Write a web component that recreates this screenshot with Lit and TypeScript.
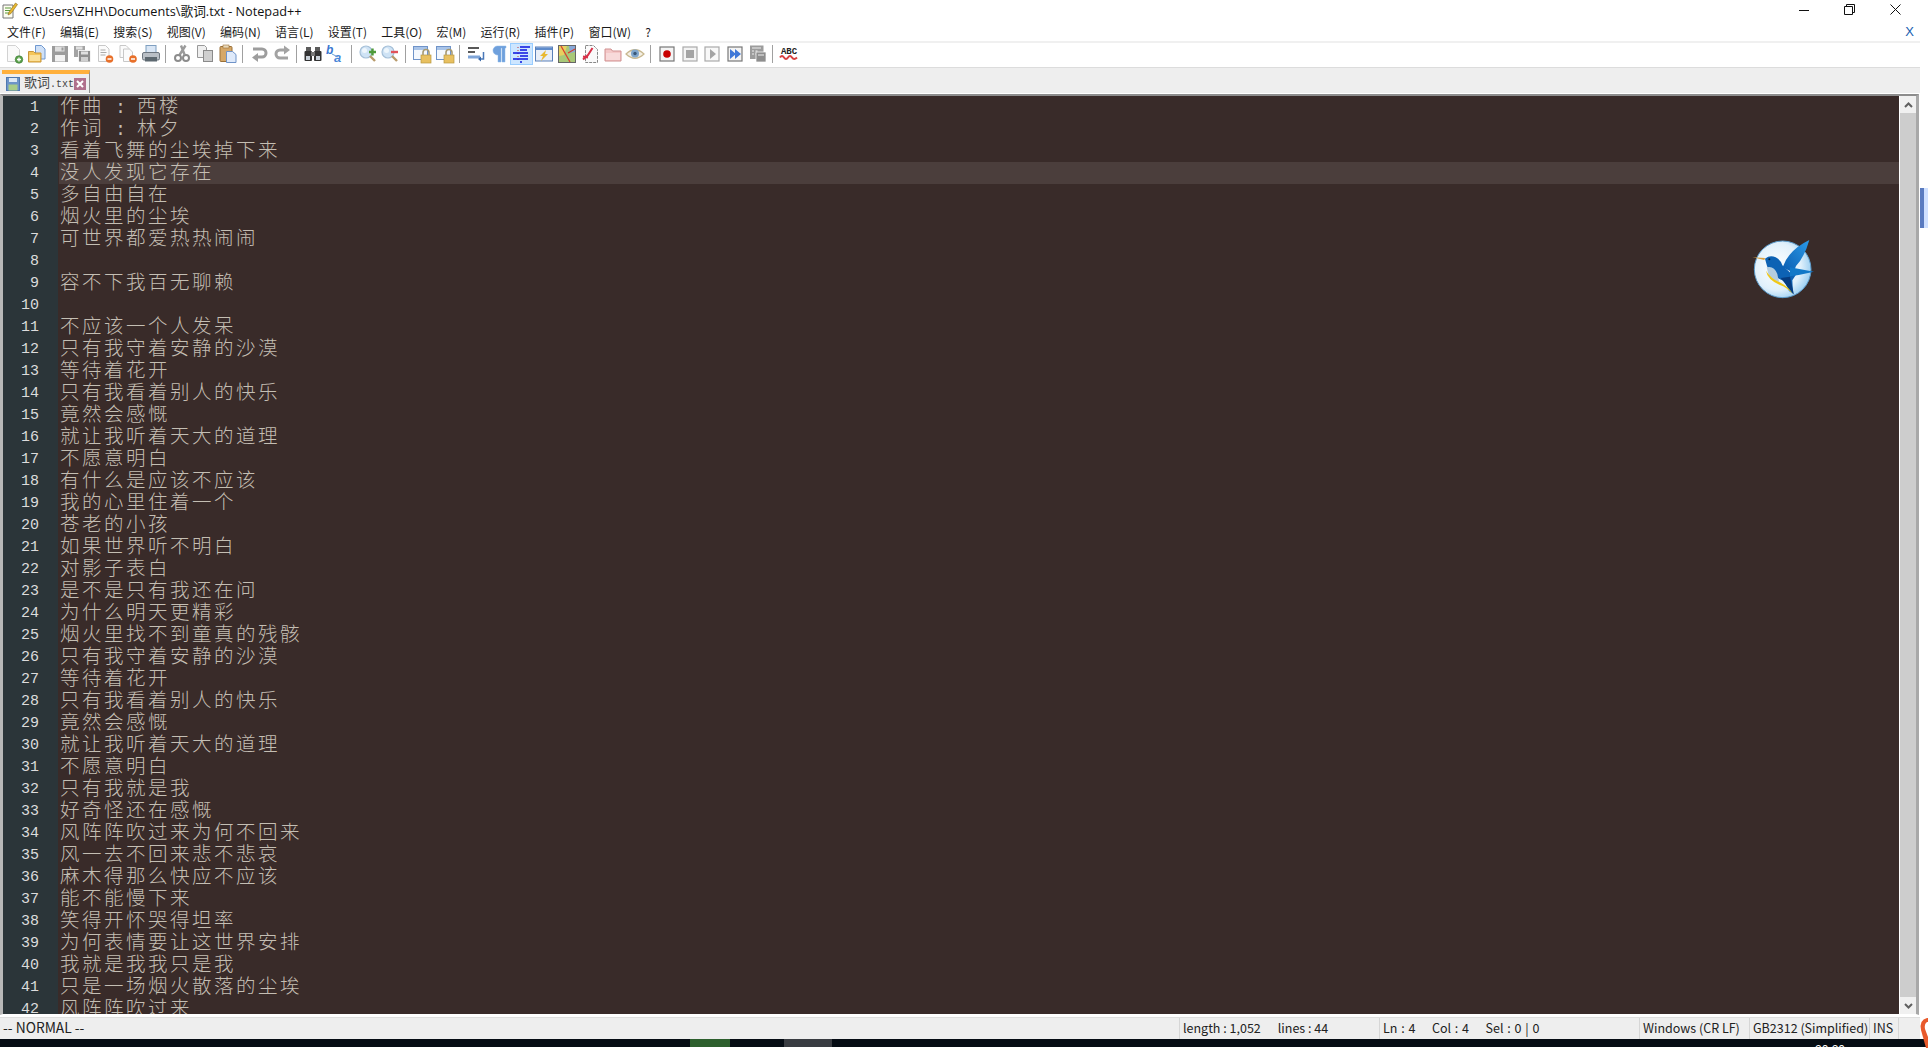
import { LitElement, html, css, svg } from "lit";
import { customElement } from "lit/decorators.js";

const LINES = `作曲 : 西楼
作词 : 林夕
看着飞舞的尘埃掉下来
没人发现它存在
多自由自在
烟火里的尘埃
可世界都爱热热闹闹

容不下我百无聊赖

不应该一个人发呆
只有我守着安静的沙漠
等待着花开
只有我看着别人的快乐
竟然会感慨
就让我听着天大的道理
不愿意明白
有什么是应该不应该
我的心里住着一个
苍老的小孩
如果世界听不明白
对影子表白
是不是只有我还在问
为什么明天更精彩
烟火里找不到童真的残骸
只有我守着安静的沙漠
等待着花开
只有我看着别人的快乐
竟然会感慨
就让我听着天大的道理
不愿意明白
只有我就是我
好奇怪还在感慨
风阵阵吹过来为何不回来
风一去不回来悲不悲哀
麻木得那么快应不应该
能不能慢下来
笑得开怀哭得坦率
为何表情要让这世界安排
我就是我我只是我
只是一场烟火散落的尘埃
风阵阵吹过来`.split("\n");

const MENUS = ["文件(F)", "编辑(E)", "搜索(S)", "视图(V)", "编码(N)", "语言(L)", "设置(T)", "工具(O)", "宏(M)", "运行(R)", "插件(P)", "窗口(W)", "?"];

const TOOLS = [
  "new", "open", "save", "saveall", "close", "closeall", "print", "|",
  "cut", "copy", "paste", "|",
  "undo", "redo", "|",
  "find", "replace", "|",
  "zoomin", "zoomout", "|",
  "syncv", "synch", "|",
  "wrap", "para", "indent", "monitor", "map", "func", "folder", "eye", "|",
  "rec", "stop", "play", "playx", "savemacro", "|",
  "abc",
];

const lock = svg`<rect x="9" y="11" width="10" height="8" fill="#e8c060" stroke="#b89840" stroke-width=".7"/><path d="M11 11V8.500a3 3 0 0 1 6 0V11" fill="none" stroke="#a89a70" stroke-width="1.600"/>`;
const win = svg`<rect x="1.500" y="2.500" width="14" height="13" fill="#f4f8fd" stroke="#6f93c8"/><rect x="2" y="3" width="13" height="3" fill="#a9c4e8"/>`;
const lens = svg`<circle cx="8" cy="8" r="6" fill="#cfe3f5" stroke="#a6c0d8" stroke-width="1.200"/><circle cx="6.500" cy="6.500" r="2.500" fill="#eef6fc"/><path d="M12 12l5 5" stroke="#b89a6a" stroke-width="2.400"/>`;

const ICONS: Record<string, unknown> = {
  new: svg`<path d="M3.500 1.500h8l4 4v12h-12z" fill="#fafafa" stroke="#d2d2d2"/><circle cx="15" cy="15.500" r="3.800" fill="#5aa04a" stroke="#3d7a35" stroke-width=".6"/><path d="M13 15.500h4M15 13.500v4" stroke="#fff" stroke-width="1.300"/>`,
  open: svg`<path d="M8.500 1.500h6l3.500 3.500v10h-9.500z" fill="#cfe0f6" stroke="#6f98d0"/><path d="M1.500 7.500h5l1.500 1.500h6v9h-12.500z" fill="#f5c65a" stroke="#c8963a"/><rect x="2.500" y="11" width="10.500" height="6" fill="#fbe09a"/>`,
  save: svg`<rect x="2" y="2" width="16" height="16" fill="#9c9c9c"/><rect x="5" y="2.500" width="9.500" height="5" fill="#dfdfdf"/><rect x="5" y="11" width="10" height="6.500" fill="#f2f2f2"/><rect x="11.500" y="3.500" width="2" height="3" fill="#9c9c9c"/>`,
  saveall: svg`<rect x="2" y="2" width="11" height="11" fill="#a4a4a4"/><rect x="4" y="2.500" width="6.500" height="3" fill="#e0e0e0"/><rect x="6.500" y="6.500" width="12" height="11.500" fill="#8f8f8f" stroke="#fff" stroke-width=".8"/><rect x="9" y="7.500" width="7" height="3" fill="#e0e0e0"/><rect x="9" y="13" width="7" height="4.500" fill="#d0d0d0"/>`,
  close: svg`<path d="M3.500 1.500h7l3.500 3.500v12.500h-10.500z" fill="#fbfbfb" stroke="#c8c8c8"/><path d="M5.500 6h5M5.500 8.500h6M5.500 11h5" stroke="#aaa"/><circle cx="14.500" cy="15" r="3.800" fill="#e8702a"/><path d="M12.500 15h4" stroke="#fff" stroke-width="1.500"/>`,
  closeall: svg`<path d="M2 1.500h6l3 3v9h-9z" fill="#fbfbfb" stroke="#c8c8c8"/><path d="M5.500 5h6l3 3v9.500h-9z" fill="#fbfbfb" stroke="#c8c8c8"/><circle cx="15" cy="15" r="3.800" fill="#e8702a"/><path d="M13 15h4" stroke="#fff" stroke-width="1.500"/>`,
  print: svg`<rect x="5" y="1.500" width="10" height="8" fill="#d9e6f5" stroke="#7f9fc0"/><rect x="1.500" y="8.500" width="17" height="7.500" rx="1.500" fill="#b9bfc6" stroke="#6d7680"/><rect x="4" y="13" width="12" height="4.500" fill="#5d6870"/>`,
  cut: svg`<path d="M13.500 1.500L7.500 11M9 1.500l3.500 9" stroke="#9b9b9b" stroke-width="2.400" fill="none"/><circle cx="6" cy="14" r="3" fill="none" stroke="#8c8c8c" stroke-width="2"/><circle cx="14" cy="14" r="3" fill="none" stroke="#8c8c8c" stroke-width="2"/>`,
  copy: svg`<path d="M2.500 1.500h7l2 2v10h-9z" fill="#efefef" stroke="#999"/><rect x="8.500" y="6.500" width="9" height="11" fill="#cfcfcf" stroke="#8a8a8a"/>`,
  paste: svg`<rect x="2" y="2.500" width="12" height="15" rx="1" fill="#d6a868" stroke="#9a7038"/><rect x="5" y="1" width="6" height="3" fill="#e8d8b8" stroke="#9a7038" stroke-width=".6"/><path d="M8.500 7.500h6l3.500 3v8h-9.500z" fill="#dfeafa" stroke="#6f93c8"/>`,
  undo: svg`<path d="M4 5h9a4 4 0 0 1 0 8H8" fill="none" stroke="#9d9d9d" stroke-width="3"/><path d="M9 9.500L3 14l6 4.500z" fill="#9d9d9d" transform="translate(0 -.5)"/>`,
  redo: svg`<path d="M16 14H8a4 4 0 0 1 0-8h5" fill="none" stroke="#a3a3a3" stroke-width="3"/><path d="M12 1.500L18 6l-6 4.500z" fill="#a3a3a3"/>`,
  find: svg`<rect x="3" y="3" width="5" height="5" fill="#5c5c5c"/><rect x="12" y="3" width="5" height="5" fill="#5c5c5c"/><rect x="1.500" y="7" width="7.500" height="10" rx="1" fill="#333"/><rect x="11" y="7" width="7.500" height="10" rx="1" fill="#333"/><rect x="8" y="8" width="4" height="4" fill="#777"/><rect x="3" y="12" width="4" height="4" fill="#c8d0d8"/><rect x="13" y="12" width="4" height="4" fill="#c8d0d8"/>`,
  replace: svg`<text x="0" y="10" font-family="Liberation Sans" font-size="12" font-weight="700" font-style="italic" fill="#3a78d0">b</text><text x="8" y="18" font-family="Liberation Sans" font-size="13" font-weight="700" font-style="italic" fill="#4a88d8">a</text><path d="M6 10l6 3" stroke="#6aa0d8"/>`,
  zoomin: svg`${lens}<path d="M11 8h7M14.500 4.500v7" stroke="#4f9a3a" stroke-width="2.400"/>`,
  zoomout: svg`${lens}<path d="M11 8h7" stroke="#e0525a" stroke-width="2.400"/>`,
  syncv: svg`${win}${lock}`,
  synch: svg`${win}${lock}`,
  wrap: svg`<path d="M2 4h11M2 8h7" stroke="#222" stroke-width="1.500"/><path d="M2 13h12" stroke="#7fa5d8" stroke-width="3"/><path d="M17.500 8v7h-4" fill="none" stroke="#4a78b8" stroke-width="1.500"/><path d="M15 12.500l-3 2.500 3 2.500z" fill="#3868a8"/>`,
  para: svg`<path d="M8 2h9v2h-1v14h-3V4h-1v14H9v-7a4.500 4.500 0 0 1-1-9z" fill="#6fa0dc" stroke="#8fb8e8" stroke-width=".5"/>`,
  indent: svg`<path d="M7 3v15" stroke="#c03030" stroke-dasharray="1 2"/><path d="M9 3h10M9 6h7M2 9h15M9 12h8M2 15h15" stroke="#0a10e0" stroke-width="1.600"/><path d="M9 18h2" stroke="#0a10e0" stroke-width="1.400"/>`,
  monitor: svg`<rect x="1.500" y="3" width="17" height="14" fill="#e8eef8" stroke="#5a80b8"/><rect x="2" y="3.500" width="16" height="2.500" fill="#5f8ccc"/><path d="M12 6l-6 6h3l-2 5 7-7h-3z" fill="#e8b830"/>`,
  map: svg`<rect x="1.500" y="1.500" width="17" height="17" fill="#a8c878" stroke="#666"/><path d="M2 2h8l-3 9-5 1z" fill="#e8d060"/><path d="M12 2h6v6l-5 1z" fill="#88a8d8"/><path d="M4 2l9 16M11 9l7-4" stroke="#d84030" stroke-width="1.300"/>`,
  func: svg`<path d="M5.500 1.500h8l4 4v13h-12z" fill="#fafafa" stroke="#888" stroke-dasharray="3 1"/><path d="M12.500 4L8 11 3 15.500M3 12.500l5 1" stroke="#d83048" stroke-width="2" fill="none"/>`,
  folder: svg`<path d="M2 5h6l1.500 2h8.500v10h-16z" fill="#f4c8c8" stroke="#d09090"/><rect x="3" y="9" width="14" height="7" fill="#f8dada"/>`,
  eye: svg`<path d="M1 10q9-8.500 18 0q-9 8.500-18 0z" fill="#f4efe4" stroke="#c8b890" stroke-width="1.200"/><circle cx="10" cy="9.500" r="4" fill="#7fa6cc"/><circle cx="10" cy="9.500" r="1.700" fill="#3a5878"/>`,
  rec: svg`<rect x="3" y="3" width="14" height="14" fill="#f4f4f4" stroke="#777" stroke-width="1.200"/><circle cx="10" cy="10" r="3.800" fill="#c80000"/>`,
  stop: svg`<rect x="3" y="3" width="14" height="14" fill="#f4f4f4" stroke="#aaa" stroke-width="1.200"/><rect x="6" y="6" width="8" height="8" fill="#a4a4a4"/>`,
  play: svg`<rect x="3" y="3" width="14" height="14" fill="#f8f8f8" stroke="#aaa" stroke-width="1.200"/><path d="M8 5l6 5-6 5z" fill="#a4a4a4"/>`,
  playx: svg`<rect x="3" y="3" width="14" height="14" fill="#f4f4f4" stroke="#777" stroke-width="1.200"/><path d="M5 5l6 5-6 5zM10 5l6 5-6 5z" fill="#3f78d8"/>`,
  savemacro: svg`<rect x="2" y="1.500" width="13.500" height="13.500" fill="#9c9c9c"/><path d="M4 4h9M4 7h2M7.500 7h2M4 10h2M7.500 10h2" stroke="#eee"/><rect x="8" y="8" width="10" height="10" fill="#8e8e8e" stroke="#fff" stroke-width=".7"/><path d="M10 11h6" stroke="#eee"/>`,
  abc: svg`<text x="10" y="9.500" text-anchor="middle" font-family="Liberation Mono" font-size="9" font-weight="700" fill="#222">ABC</text><path d="M1 13.500q2-3 4 0t4 0 4 0 5 0" fill="none" stroke="#d84040" stroke-width="2"/>`,
};

@customElement("app-root")
export class AppRoot extends LitElement {
  static styles = css`
    :host {
      display: block;
      position: relative;
      width: 1928px;
      height: 1048px;
      overflow: hidden;
      background: #fff;
      font-family: "Noto Sans CJK SC", "Noto Sans", sans-serif;
      font-size: 12px;
      color: #222;
    }
    .frame {
      width: 1920px;
    }
    .title {
      display: flex;
      align-items: center;
      height: 21px;
      padding-left: 2px;
      gap: 5px;
    }
    .title .app-ico {
      width: 16px;
      height: 17px;
      flex: none;
    }
    .title .caption {
      flex: 1;
      font-family: "Open Sans", "Noto Sans CJK SC", sans-serif;
      font-size: 12.700px;
      color: #111;
    }
    .winbtn {
      width: 45.500px;
      height: 21px;
      display: flex;
      justify-content: center;
      align-items: center;
    }
    .winbtns {
      display: flex;
      margin-right: 2px;
      margin-top: -2px;
    }
    .menu {
      display: flex;
      align-items: center;
      height: 20px;
      padding-left: 7px;
      gap: 14.200px;
      color: #1a1a1a;
    }
    .menu .spacer {
      flex: 1;
    }
    .menu .x {
      margin-right: 6px;
      color: #2060b0;
      font-family: "Liberation Sans", sans-serif;
      font-size: 13px;
    }
    .toolbar {
      display: flex;
      align-items: flex-start;
      height: 24px;
      padding-left: 2.600px;
      border-top: 2px solid #f0f0f0;
      border-bottom: 1px solid #dcdcdc;
    }
    .tool {
      width: 22.800px;
      height: 22px;
      flex: none;
      display: flex;
      align-items: center;
      justify-content: center;
    }
    .tool svg {
      width: 20px;
      height: 20px;
    }
    .tool.active {
      background: #cde6ff;
      box-shadow: inset 0 0 0 1px #99cdff;
    }
    .sep {
      width: 1px;
      height: 18px;
      flex: none;
      background: #a0a0a0;
      margin: 2px 4.600px 0 3px;
    }
    .tabbar {
      height: 25px;
      background: #eeeeee;
      display: flex;
      align-items: flex-end;
      padding-left: 2px;
      border-bottom: 1px solid #fff;
    }
    .tab {
      width: 88px;
      height: 23px;
      box-sizing: border-box;
      border-top: 4px solid #ffb03c;
      border-right: 1px solid #8f8f8f;
      display: flex;
      align-items: center;
      padding-left: 4px;
      gap: 4px;
      color: #444;
      font-size: 13px;
      line-height: 18px;
    }
    .tab .name {
      white-space: pre;
      width: 46px;
      flex: none;
    }
    .tab .name i {
      font-family: "Liberation Mono", monospace;
      font-style: normal;
      font-size: 10px;
    }
    .tab svg {
      flex: none;
    }
    .editor {
      height: 918px;
      display: flex;
      border-top: 2px solid #8c8c8c;
      border-left: 3px solid #b8b8b8;
      border-right: 3px solid #a8a8a8;
      border-bottom: 1px solid #fff;
      box-shadow: 0 1px 0 #fff;
      overflow: hidden;
      width: 1913px;
      box-sizing: content-box;
    }
    .code {
      flex: 1;
      min-width: 0;
      overflow: hidden;
      background: #392b29;
    }
    .row {
      display: flex;
      height: 22px;
    }
    .num {
      width: 55px;
      flex: none;
      box-sizing: border-box;
      padding-right: 19px;
      text-align: right;
      background: #2b3539;
      color: #dcdcdc;
      font-family: "Liberation Mono", monospace;
      font-size: 15px;
      line-height: 24px;
    }
    .txt {
      flex: 1;
      margin-left: 1px;
      padding-left: 1px;
      color: #c4beb3;
      font-size: 19.500px;
      font-weight: 300;
      line-height: 18px;
      letter-spacing: 2.500px;
      white-space: pre;
    }
    .row.current .txt {
      background: #4b3e3c;
    }
    .txt i {
      font-family: "Liberation Mono", monospace;
      font-style: normal;
      font-size: 18.330px;
      letter-spacing: 0;
    }
    .scroll {
      width: 17px;
      flex: none;
      background: #fff;
      display: flex;
      flex-direction: column;
      padding-left: 1px;
      box-sizing: border-box;
    }
    .arrow {
      height: 17px;
      background: #f0f0f0;
      display: flex;
      align-items: center;
      justify-content: center;
    }
    .thumb {
      flex: 1;
      background: #cdcdcd;
    }
    .status {
      display: flex;
      height: 22px;
      margin-top: 2px;
      background: #eeeeee;
      border-top: 1px solid #dedede;
      box-sizing: border-box;
      align-items: stretch;
      font-size: 12.500px;
      line-height: 19px;
      color: #222;
    }
    .cell {
      box-sizing: border-box;
      padding-left: 3px;
      white-space: pre;
      border-right: 1px solid #d6d6d6;
      flex: none;
      display: flex;
      gap: 17px;
    }
    .cell.mode {
      font-size: 13.800px;
      width: 1180px;
    }
    .cell.doc {
      width: 200px;
    }
    .cell.pos {
      width: 260px;
      gap: 16.500px;
      word-spacing: 1px;
    }
    .cell.eol {
      width: 110px;
    }
    .cell.enc {
      width: 120px;
    }
    .cell.ins {
      width: 29px;
    }
    .task {
      height: 8px;
      width: 1928px;
      background: #050c14;
      display: flex;
      overflow: hidden;
    }
    .task .green {
      width: 40px;
      margin-left: 690px;
      background: #2d5f2e;
    }
    .task .gray {
      width: 48px;
      margin-left: 54px;
      background: #393c42;
    }
    .task .clock {
      margin-left: 983px;
      margin-top: 4px;
      color: #fff;
      font-family: "Liberation Sans", sans-serif;
      font-size: 12px;
      line-height: 14px;
    }
    .logo {
      position: absolute;
      left: 1740px;
      top: 230px;
      width: 90px;
      height: 80px;
    }
    .edge-tab {
      position: absolute;
      left: 1920px;
      top: 188px;
      width: 8px;
      height: 40px;
      background: linear-gradient(90deg, #5a7bc0 0 4px, #cfe0ff 4px);
    }
    .corner {
      position: absolute;
      left: 1918px;
      top: 1016px;
    }
  `;

  private renderLine(text: string) {
    // half width characters come out of a mono face, as in the editor
    return text.split(/( : )/).map((part) =>
      part === " : " ? html`<i>${part}</i>` : part
    );
  }

  render() {
    return html`
      <div class="frame">
        <div class="title">
          <svg class="app-ico" viewBox="0 0 16 17">
            <path d="M1 3h10v13H1z" fill="#fdfdf0" stroke="#777"/>
            <path d="M3 6h6M3 8.500h6M3 11h5" stroke="#5a9a3a"/>
            <path d="M13.500 1L7 10l-1 3 3-1.500 6.500-9z" fill="#e8b830" stroke="#8a6a20" stroke-width=".6"/>
          </svg>
          <span class="caption">C:\\Users\\ZHH\\Documents\\歌词.txt - Notepad++</span>
          <div class="winbtns">
            <div class="winbtn">
              <svg width="10" height="10"><path d="M0 5.500h10" stroke="#111"/></svg>
            </div>
            <div class="winbtn">
              <svg width="11" height="11"><path d="M.5 2.500h8v8h-8zM2.500 2.500v-2h8v8h-2" fill="none" stroke="#111"/></svg>
            </div>
            <div class="winbtn">
              <svg width="11" height="11"><path d="M.5.500l10 10M10.500.500l-10 10" stroke="#111"/></svg>
            </div>
          </div>
        </div>
        <div class="menu">
          ${MENUS.map((m) => html`<span>${m}</span>`)}
          <span class="spacer"></span>
          <span class="x">X</span>
        </div>
        <div class="toolbar">
          ${TOOLS.map((t) =>
            t === "|"
              ? html`<div class="sep"></div>`
              : html`<div class="tool ${t === "indent" ? "active" : ""}">
                  <svg viewBox="0 0 20 20">${ICONS[t]}</svg>
                </div>`
          )}
        </div>
        <div class="tabbar">
          <div class="tab">
            <svg width="14" height="14" viewBox="0 0 14 14">
              <rect x=".5" y=".5" width="13" height="13" fill="#6d94c8" stroke="#4f78b0"/>
              <rect x="3" y="1" width="8" height="4" fill="#dde8f5"/>
              <rect x="2.500" y="7.500" width="9" height="6" fill="#a8cc88"/>
            </svg>
            <span class="name">歌词<i>.txt</i></span>
            <svg width="12" height="12" viewBox="0 0 12 12">
              <rect width="12" height="12" fill="#b0708c"/>
              <path d="M3 3l6 6M9 3l-6 6" stroke="#fff" stroke-width="2"/>
            </svg>
          </div>
        </div>
        <div class="editor">
          <div class="code">
            ${LINES.map(
              (l, i) => html`<div class="row ${i === 3 ? "current" : ""}">
                <div class="num">${i + 1}</div>
                <div class="txt">${this.renderLine(l)}</div>
              </div>`
            )}
          </div>
          <div class="scroll">
            <div class="arrow">
              <svg width="9" height="6"><path d="M1 5l3.500-3.500L8 5" fill="none" stroke="#606060" stroke-width="2"/></svg>
            </div>
            <div class="thumb"></div>
            <div class="arrow">
              <svg width="9" height="6"><path d="M1 1l3.500 3.500L8 1" fill="none" stroke="#606060" stroke-width="2"/></svg>
            </div>
          </div>
        </div>
        <div class="status">
          <div class="cell mode">-- NORMAL --</div>
          <div class="cell doc"><span>length : 1,052</span><span>lines : 44</span></div>
          <div class="cell pos"><span>Ln : 4</span><span>Col : 4</span><span>Sel : 0 | 0</span></div>
          <div class="cell eol">Windows (CR LF)</div>
          <div class="cell enc">GB2312 (Simplified)</div>
          <div class="cell ins">INS</div>
        </div>
      </div>
      <div class="task">
        <div class="green"></div>
        <div class="gray"></div>
        <div class="clock">20:20</div>
      </div>
      <svg class="logo" viewBox="0 0 270 240">
        <defs>
          <radialGradient id="disc" cx=".4" cy=".45" r=".6">
            <stop offset="0" stop-color="#ffffff"/>
            <stop offset=".7" stop-color="#e0f0fb"/>
            <stop offset="1" stop-color="#9fd0f2"/>
          </radialGradient>
          <linearGradient id="wing" x1="0" y1="1" x2="1" y2="0">
            <stop offset="0" stop-color="#0a5cb0"/>
            <stop offset="1" stop-color="#2a9ae8"/>
          </linearGradient>
        </defs>
        <circle cx="128" cy="118" r="85" fill="url(#disc)" stroke="#5c9ccc" stroke-width="3"/>
        <path d="M37 82l38 2-2 6z" fill="#d8a040"/>
        <path d="M75 86q15-12 32-4 14 6 20 24l24 22 18 5-12 18 2 40-12-8-14-30q-30-10-45-30-8-14-13-37z" fill="#0d62b4"/>
        <path d="M128 112Q145 60 208 30q-14 50-40 78l-8 20z" fill="url(#wing)"/>
        <path d="M150 112l72 13-46 10-26 4z" fill="#1178c8"/>
        <path d="M150 140l12 54-18-22-22-28z" fill="#063c80"/>
        <path d="M80 112q22-6 32 20 2 14 6 24-24-8-32-20z" fill="#b4cde0"/>
        <path d="M78 122q4 26 40 42 24 8 40 28-10-20-36-34-30-12-44-36z" fill="#f0c818"/>
        <circle cx="88" cy="88" r="3" fill="#06243f"/>
      </svg>
      <div class="edge-tab"></div>
      <svg class="corner" width="10" height="32">
        <path d="M9 2q-8 2-6 12l5 18h2V2z" fill="#e85a2c"/>
        <path d="M9 6q-3 2-2 7l3 8V6z" fill="#fff"/>
      </svg>
    `;
  }
}
